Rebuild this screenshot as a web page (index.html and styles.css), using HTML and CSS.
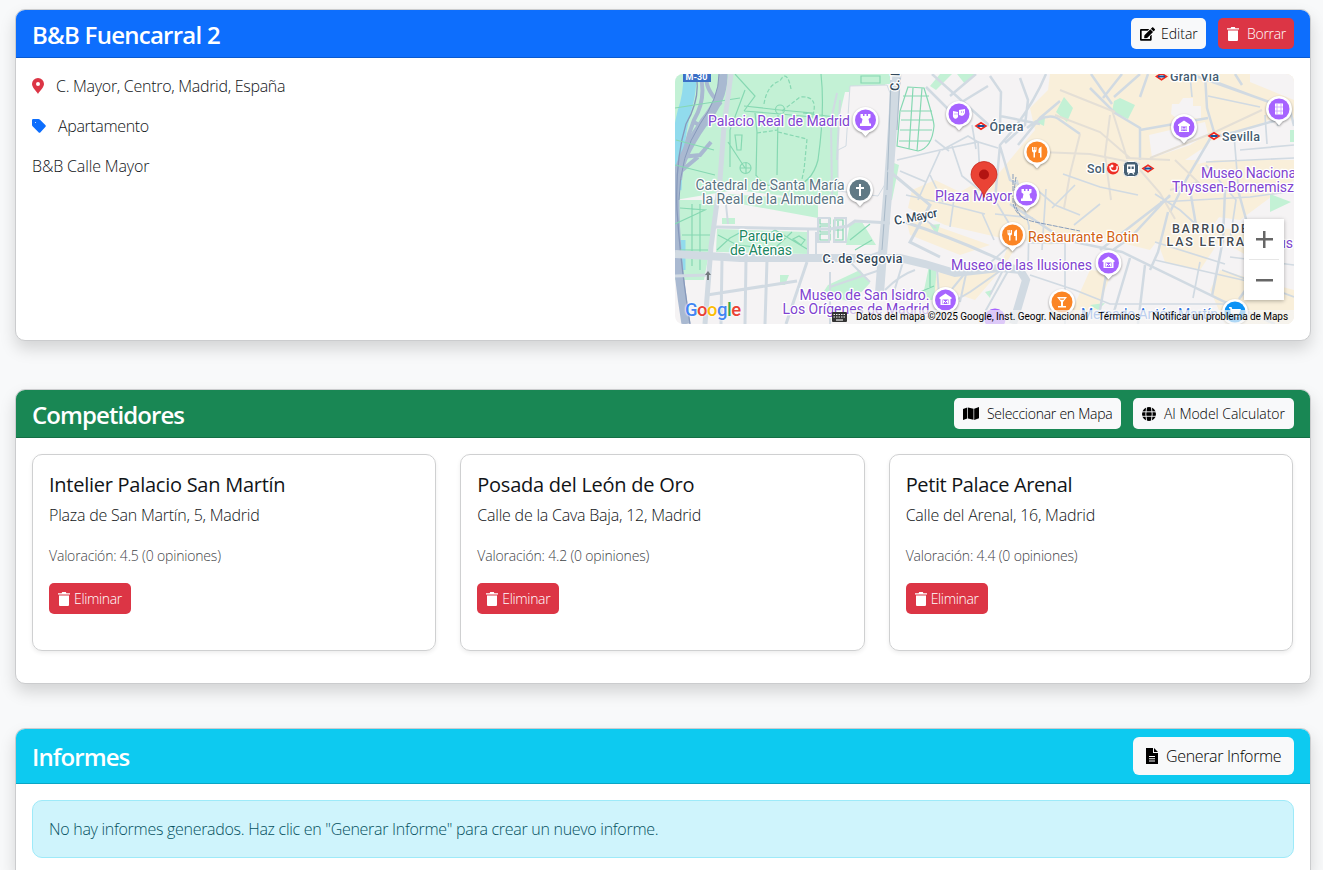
FILE: index.html
```html
<!DOCTYPE html>
<html lang="es">
<head>
<meta charset="utf-8">
<title>B&amp;B Fuencarral 2</title>
<link rel="stylesheet" href="styles.css">
</head>
<body>
<svg class="sprite" width="0" height="0" aria-hidden="true">
  <defs>
    <symbol id="trash" viewBox="0 0 12 14"><path d="M0 1.2h3.6L4.2 0h3.6l.6 1.2H12v1.3H0zM1 3.5h10v9.2c0 .8-.5 1.3-1.3 1.3H2.3C1.500 14 1 13.500 1 12.700z"/></symbol>
    <symbol id="edit" viewBox="0 0 576 512"><path d="M402.600 83.200l90.200 90.200c3.800 3.800 3.800 10 0 13.800L274.400 405.600l-92.800 10.300c-12.400 1.400-22.900-9.100-21.500-21.500l10.300-92.800L388.800 83.200c3.800-3.800 10-3.800 13.800 0zm162-22.900l-48.800-48.800c-15.200-15.200-39.900-15.200-55.200 0l-35.400 35.400c-3.800 3.800-3.800 10 0 13.800l90.200 90.200c3.800 3.800 10 3.800 13.800 0l35.400-35.400c15.200-15.300 15.200-40 0-55.200zM384 346.200V448H64V128h229.800c3.200 0 6.200-1.300 8.500-3.500l40-40c7.600-7.600 2.200-20.500-8.500-20.500H48C21.500 64 0 85.500 0 112v352c0 26.500 21.500 48 48 48h352c26.500 0 48-21.500 48-48V306.200c0-10.700-12.900-16-20.500-8.500l-40 40c-2.200 2.300-3.500 5.300-3.500 8.500z"/></symbol>
    <symbol id="file" viewBox="0 0 12 16"><path fill-rule="evenodd" d="M0 0h7v5h5v11H0zM8 0l4 4H8zM3 8v1h6V8zm0 2.300v1h6v-1zm0 2.200v1h6v-1z"/></symbol>

    <g id="pin-body"><path d="M0 16.500 L-3.800 12.300 C-9.500 10.500 -13 6 -13 0 A13 13 0 0 1 13 0 C13 6 9.500 10.500 3.800 12.300Z" fill="#fff"/></g>
    <g id="museum"><path d="M-6-2.500 0-6.500 6-2.500V-1H5v6H-5v-6h-1z" fill="#fff"/><path d="M-3-.5h6V4h-6z" fill="#a663ff"/><path d="M-2 3.500v-3l2 2 2-2v3" fill="none" stroke="#fff"/></g>
    <g id="rook"><path d="M-5-6h2.500v2h1.500v-2h2v2h1.500v-2H5v3.500L3-1l1 4.500h1.500V6h-11V3.500H-4L-3-1l-2-1.500z" fill="#fff"/></g>
    <g id="fork"><path d="M-5-5v3.500q0 2 1.500 2V5.500h1.500V.5q1.500 0 1.500-2V-5h-1v3h-.7v-3h-1v3h-.7v-3zM4.500-5.500q-3 1-3 4V1H3v4.500h1.500z" fill="#fff"/></g>
    <g id="metro"><path d="M-5 0 0-3.200 5 0 0 3.200z" fill="#fff" stroke="#f02a20" stroke-width="1.600"/><path d="M-3.500-1h7v2h-7z" fill="#14549c"/></g>
  </defs>
</svg>

<main class="page">
  <section class="card card--property">
    <header class="card-header card-header--blue">
      <h2 class="heading">B&amp;B Fuencarral 2</h2>
      <div class="actions">
        <button class="btn btn--light btn--edit"><svg class="icon icon--edit"><use href="#edit"/></svg><span>Editar</span></button>
        <button class="btn btn--danger btn--delete"><svg class="icon icon--trash"><use href="#trash"/></svg><span>Borrar</span></button>
      </div>
    </header>
    <div class="card-body property">
      <div class="details">
        <p class="detail detail--place"><svg class="icon icon--place" viewBox="0 0 12 16"><path fill-rule="evenodd" d="M6 16C4.500 13 0 9.500 0 6a6 6 0 0 1 12 0c0 3.500-4.500 7-6 10zM6 4a2 2 0 1 0 0 4 2 2 0 0 0 0-4z"/></svg><span>C. Mayor, Centro, Madrid, España</span></p>
        <p class="detail detail--type"><svg class="icon icon--tag" viewBox="0 0 14 14"><path fill-rule="evenodd" d="M0 1.200Q0 0 1.200 0H6.500Q7.300 0 8 .7L13.300 6Q14.300 7 13.300 8L8.500 13.200Q7.500 14.200 6.500 13.200L.8 7.500Q0 6.800 0 6zM3.500 3a.5.5 0 1 0 0 1 .5.5 0 0 0 0-1z"/></svg><span>Apartamento</span></p>
        <p class="detail detail--name"><span>B&amp;B Calle Mayor</span></p>
      </div>
      <div class="map">
        <svg class="map-canvas" viewBox="675 74 619 250">
          <rect x="675" y="74" width="619" height="250" fill="#f5f3f4"/>
          <g fill="#f9efda">
            <path d="M1050 74 1294 74V90L1262 74H1294V118L1278 130 1240 131 1245 134 1200 150 1185 160 1294 160V180L1240 220 1180 212 1150 250 1090 235 1050 245 1020 240 1005 265 975 300 950 292 925 290 940 272 965 272 1000 268 1010 240 945 225 908 208 912 190 935 180 960 192 985 178 1000 172 1018 150 1035 130 1030 108 1048 90z"/>
            <path d="M1168 224 1245 230 1268 250 1246 255 1220 240 1200 270 1165 262 1155 235zM1115 190 1190 170 1234 195 1200 245 1130 240zM1220 270 1294 290V324H1225L1210 290zM1090 270 1112 272 1095 315H1070zM905 215 990 245 960 255 910 235z"/>
          </g>
          <g fill="#f5f3f4">
            <path d="M1149 135 1205 122 1208 134 1190 145 1152 158zM1210 141 1240 134 1289 110 1294 150V160L1215 160 1198 164zM1250 82 1294 100V74H1250zM1172 104h7l4-6h10v8h8v12h-25l-5-4z"/>
            <path d="M1025 270 1070 280 1065 320H1028zM1140 262 1200 280 1195 324H1135z"/>
          </g>
          <g fill="#c3f1d5">
            <path d="M675 74H890L882 92H845L838 122V200H820L735 190 675 200zM675 200H720L710 248 704 280H675zM717 229 808 232 808 254 716 252zM728 194 818 200V218L730 202zM850 223 862 222 876 245 846 245zM722 218h13v6h-13zM780 275h9l-4 10h-5zM828 285 860 270 870 283 852 302 822 294zM862 74H890V84H862zM886 160 899 165 892 200H885zM929 266h8l-3 34h-12zM985 292l7-2-2 8zM930 86 940 74H952L936 90zM957 74H975L965 84zM1064 97 1073 108 1067 122 1056 112zM1034 121 1045 118 1044 126zM1114 101 1120 98 1135 105 1128 119 1112 112zM1270 194 1291 202 1270 212zM930 225 940 224 937 235zM1090 305 1105 303 1098 310zM1051 298h10v8h-8zM1290 130h4v12h-4z"/>
          </g>
          <g fill="none" stroke="#91dbed">
            <path d="M690 74Q690 95 684 112 676 145 675 190" stroke-width="13"/>
            <path d="M682 240V270" stroke-width="7"/>
          </g>
          <g fill="none" stroke="#a9b9d1">
            <path d="M723 74Q724 98 704 122 677 160 675 190 674 250 686 324" stroke-width="9"/>
            <path d="M700 74Q707 98 694 120 684 145 680 180M708 74Q702 86 721 105M694 122Q704 130 714 117M681 157 700 155 711 142M680 172 698 157" stroke-width="4"/>
            <path d="M696 74Q701 98 686 124 675 160 677 210 680 260 690 324" stroke="#8799bb" stroke-width="1.300"/>
            <path d="M719 74Q719 98 700 124 680 155 679 200" stroke="#8799bb" stroke-width="1"/>
          </g>
          <g class="paths" fill="none" stroke="#86d8b2" stroke-width="1.200">
            <path d="M744 106 780 110 813 113M744 111 780 114 813 117M780 105a4 4 0 1 1 0 9 4 4 0 0 1 0-9M755 113 757 132 756 176M745 90 730 130 730 167M778 115 777 175M735 74 755 96 744 111M821 74Q825 110 818 160 812 184 790 188M756 175Q765 190 790 188M740 168a5.500 5.500 0 1 0 11 0 5.500 5.500 0 0 0-11 0M740 168h11M746 162v12M735 135h7l-1 15h-4zM803 113 835 117M675 108 740 98M676 140 714 150M675 165 715 175M728 142 745 168M692 204v62M700 204v66M680 208 705 210 675 224M682 235h28M680 250h28"/>
            <path d="M764 104Q767 85 780 81 787 68 791 89M782 111 800 97Q820 95 812 118M778 132 807 139 804 170 800 188M757 133 778 130" stroke-dasharray="4 2"/>
            <path d="M717 250 730 238 745 230 760 240 775 230 807 249M718 235 737 245 774 249 792 232M793 239l6-3 6 4-4 5zM820 218h10v6h-10zM820 226h10v6h-10zM820 234h10v6h-10zM834 220h9v20h-9zM838 221v17M834 230h9M850 240 870 224M855 250 872 240"/>
            <path d="M908 87 924 88Q934 120 934 126 932 148 918 151L897 146 900 111zM903 96H929M901 111H932M900 130H932M899 141H930M913 88 909 149M922 88 917 151M901 120H933M930 267v22M934 286 920 292M861 76H880V83H861z"/>
          </g>
          <path d="M850 86 887 85 890 93 887 181 878 196 838 191 838 150 846 146z" fill="#f5f3f4" stroke="#d2dbe3"/>
          <g class="roads" fill="none" stroke="#d1dae2">
            <path d="M731 74 724 126 720 180 711 247 705 324" stroke-width="5"/>
            <path d="M897 74 893 120 888 190 882 260 879 300" stroke-width="9"/>
            <path d="M891 80 887 190M900 78 897 130M886 195 882 250" stroke="#a8b9c8" stroke-width="1"/>
            <path d="M675 254 740 258 820 258 900 258 925 264 955 273 1000 268 1020 270 1026 280 1013 324" stroke-width="8"/>
            <path d="M716 227 810 229 830 229 848 226 855 221 890 223M722 260 721 324M746 260 745 324M767 260 765 324M807 262 786 324M707 295 797 281M675 276 707 275" stroke-width="3"/>
            <path d="M808 230V256M816 232V256M835 218h11v24h-12zM818 218h11v24h-11z" stroke-width="2"/>
            <path d="M725 195 728 224M840 100 837 160M837 93 831 120 832 196M880 270 830 287M885 250 850 263M850 262 870 282M830 272V324M885 290Q900 275 915 270M893 295 903 262M937 268 940 310M966 272 952 289M966 274 960 302M1008 271 986 310 1000 324M1003 270 990 295M1000 271 970 292 915 324" stroke-width="2"/>
            <path d="M905 222Q950 237 990 255L1022 270M888 170 930 205 910 242 940 257" stroke-width="3"/>
            <path d="M932 74 990 126M926 87 955 116M988 86 952 108M950 96 976 74M990 76 1001 92 1000 125M1020 78 1028 100 1025 125 1005 143M1046 74Q1030 112 1000 145L995 200M1027 128Q1048 110 1060 120L1080 134M1018 145 1040 118 1060 101M1000 116 1040 124M1000 146 1010 180 1018 184" stroke-width="2.500"/>
            <path d="M897 160 940 150 978 142 998 148M940 151 926 182M952 146 962 176 985 194M900 171 926 182 918 200M978 141 980 176M942 150 968 136 978 142M935 140 949 151M972 125 976 149M906 195 950 205 985 214M930 175 943 202M923 218 936 228M955 192 950 227M982 213 994 240M995 200 1010 225 1007 244M995 214 1033 218M1017 180 1029 226 1028 270M1007 248 991 262M1030 184 1055 205 1080 215" stroke-width="1.700"/>
            <path d="M1090 88 1115 113 1140 128 1140 160M1091 74 1112 104M1122 74 1103 98M1140 74 1114 97M1148 74 1140 97M1140 130 1208 118M1205 74 1207 108 1214 132 1187 178 1170 212M1205 78 1290 110 1294 126M1190 74 1278 105 1278 126M1235 74 1242 85M1288 117 1235 132 1210 138" stroke-width="2.500"/>
            <path d="M1150 158 1215 132 1262 110M1112 110 1127 158 1170 160M1060 90 1115 112M1055 115 1100 132 1130 158M1040 152 1090 154 1140 164M1080 134 1070 174 1064 208M1110 115 1105 155 1111 200M1140 170 1160 193 1175 219M1175 160 1198 182 1170 190" stroke="#e4dfd6" stroke-width="2"/>
            <path d="M1234 135 1238 184M1206 162 1294 158M1265 115 1267 144M1240 150 1294 145M1206 165 1236 200 1230 240M1190 75 1192 97M1208 96 1260 107M1063 174 1100 187 1138 195" stroke-width="1.700"/>
            <path d="M1010 204 1065 240 1122 252 1225 302 1275 324M1170 195 1130 238 1110 252 1100 310M1100 250 1170 196M1130 258 1113 315M1145 265 1138 324M1168 212 1158 252 1150 270M1225 190 1223 240 1212 296M1190 190 1196 225M1238 190 1260 270 1239 299" stroke-width="2.500"/>
            <path d="M1028 243H1065V324M1030 275 1075 290 1110 304H1230M1074 225 1100 204M1046 189 1042 250M1155 194 1180 210 1200 228M1155 242 1225 264M1155 260 1260 284M1200 262 1193 298M1222 270 1294 297M1160 202 1250 197 1294 191M1230 257 1294 265M1052 208 1075 185" stroke-width="1.700"/>
          </g>
          <path d="M1013 174V202Q1015 218 1035 222L1080 231M1016 177Q1010 210 1025 219" fill="none" stroke="#879dbc" stroke-width="1" stroke-dasharray="5 1"/>
          <rect x="683" y="69" width="28" height="13" fill="#3b70c6"/>
          <path d="M708 271l-3 4h2v5h2v-5h2z" fill="#73797e"/>

          <g>
            <g class="pin" transform="translate(865.500 120)"><use href="#pin-body"/><circle r="10.500" fill="#a663ff"/><use href="#rook"/></g>
            <g class="pin" transform="translate(1026.500 195)"><use href="#pin-body"/><circle r="10.500" fill="#a663ff"/><use href="#rook"/></g>
            <g class="pin" transform="translate(959 114)"><use href="#pin-body"/><circle r="10.500" fill="#a663ff"/><path d="M-6-3 -1-2V3q-1.500 2.500-3.500 1.500T-6 0zM0-4 6-5V-1Q5 2 3 2L0 1z" fill="#fff"/><path d="M-4.500 0h1m1 0h1M2-2h1m1 0h1" stroke="#a663ff"/></g>
            <g class="pin" transform="translate(1037 152)"><use href="#pin-body"/><circle r="10.500" fill="#fb8525"/><use href="#fork"/></g>
            <g class="pin" transform="translate(1012.500 235)"><use href="#pin-body"/><circle r="10.500" fill="#fb8525"/><use href="#fork"/></g>
            <g class="pin" transform="translate(1184 127)"><use href="#pin-body"/><circle r="10.500" fill="#a663ff"/><use href="#museum"/></g>
            <g class="pin" transform="translate(1279 109)"><use href="#pin-body"/><circle r="10.500" fill="#a663ff"/><path d="M-4-5.500h8v11h-8z" fill="#fff"/><path d="M-2-5v10M2-5v10M-4-2h8M-4 2h8" stroke="#c7a0ff" stroke-width=".8"/></g>
            <g class="pin" transform="translate(860 190)"><use href="#pin-body"/><circle r="10.500" fill="#607985"/><path d="M-1-6H1v3h3v2H1v7h-2v-7h-3v-2h3z" fill="#fff"/></g>
            <g class="pin" transform="translate(1108.500 263)"><use href="#pin-body"/><circle r="10.500" fill="#a663ff"/><use href="#museum"/></g>
            <g class="pin" transform="translate(945.500 300)"><use href="#pin-body"/><circle r="10.500" fill="#a663ff"/><use href="#museum"/></g>
            <g class="pin" transform="translate(1062 302)"><use href="#pin-body"/><circle r="10.500" fill="#fb8525"/><path d="M-5-5H5L1 0v4h3v1.500h-8V4h3V0zM-2.500-3.500h5L1.500-2.200h-3z" fill="#fff" fill-rule="evenodd"/></g>
            <g class="pin" transform="translate(1235 312)"><use href="#pin-body"/><circle r="10.500" fill="#0b92f5"/><path d="M-6-5h2.500l.7 2H6L4 2h-6.500l1 1.500H4V5h-7l-1-2-.8-6.500H-6z" fill="#fff"/></g>
            <circle cx="995" cy="319" r="10.500" fill="#a663ff"/>
          </g>
          <use href="#metro" x="981" y="126"/><use href="#metro" x="1161.500" y="76.500"/><use href="#metro" x="1214" y="136"/><use href="#metro" x="1148" y="168.500"/>
          <circle cx="1113" cy="168.500" r="6" fill="#ed2e24"/><path d="M1110 166q0 5 4 5t3-5" fill="none" stroke="#fff" stroke-width="1.500"/><circle cx="1112" cy="166" r="1.500" fill="#fff"/>
          <rect x="1123.500" y="161.500" width="15" height="15" rx="4" fill="#455f73" stroke="#fff"/><path fill-rule="evenodd" d="M1127 164.500h8v8h-1.500l1 2h-1.500l-.7-1.500h-2.600l-.7 1.500h-1.500l1-2H1127zm1.200 2v2.500h2.200v-2.500zm3.400 0v2.500h2.200v-2.500z" fill="#fff"/>

          <g class="label label--poi">
            <text x="708" y="126" textLength="142">Palacio Real de Madrid</text>
            <text x="935" y="201" textLength="77">Plaza Mayor</text>
            <text x="951" y="269.500" textLength="141">Museo de las Ilusiones</text>
            <text x="799.500" y="299.500" textLength="130">Museo de San Isidro.</text>
            <text x="782.500" y="313.500" textLength="147">Los Orígenes de Madrid</text>
            <text x="1201" y="178" textLength="95">Museo Naciona</text>
            <text x="1172" y="192" textLength="122">Thyssen-Bornemisz</text>
            <text x="1278" y="248" textLength="15">us</text>
          </g>
          <g class="label label--church">
            <text x="695.500" y="190" textLength="149">Catedral de Santa María</text>
            <text x="702" y="204" textLength="142">la Real de la Almudena</text>
          </g>
          <g class="label label--park">
            <text x="739" y="241" textLength="44">Parque</text>
            <text x="730" y="255" textLength="62">de Atenas</text>
          </g>
          <g class="label label--food"><text x="1028" y="242" textLength="111">Restaurante Botin</text></g>
          <g class="label label--shop"><text x="1081" y="318.500" textLength="137">Mercado Antón Martín</text></g>
          <g class="label label--street">
            <text x="822.500" y="263" textLength="80">C. de Segovia</text>
            <text x="895" y="225" textLength="44" transform="rotate(-11 895 225)">C. Mayor</text>
            <text x="899" y="91" transform="rotate(-88 899 91)">C. B</text>
          </g>
          <g class="label label--metro">
            <text x="989.500" y="130.500" textLength="34">Ópera</text>
            <text x="1170" y="80.500" textLength="49">Gran Vía</text>
            <text x="1222" y="140.500" textLength="38">Sevilla</text>
            <text x="1087" y="173" textLength="18">Sol</text>
          </g>
          <g class="label label--district">
            <text x="1172" y="233" textLength="76">BARRIO DE</text>
            <text x="1166.500" y="246" textLength="87">LAS LETRAS</text>
          </g>
          <text class="shield" x="685.500" y="80" textLength="22">M-30</text>

          <path d="M984 197.500C983 188 971 184 971 174.500a13 13 0 0 1 26 0C997 184 985 188 984 197.500z" fill="#ea4335" stroke="#c5281d" stroke-width=".8"/>
          <circle cx="984" cy="174.500" r="5" fill="#b31412"/>
        </svg>
        <div class="map-logo"><i class="g-blue">G</i><i class="g-red">o</i><i class="g-yellow">o</i><i class="g-blue">g</i><i class="g-green">l</i><i class="g-red">e</i></div>
        <div class="map-zoom"><span class="zoom-in"></span><span class="zoom-out"></span></div>
        <div class="map-legal">
          <svg class="keyboard" viewBox="0 0 15 10"><rect width="15" height="10" rx="1" fill="#333"/><path d="M1.500 2.500h12M1.500 5h12" stroke="#eee" stroke-width="1.200" stroke-dasharray="1.500 1"/><path d="M4 8h7" stroke="#eee" stroke-width="1.200"/></svg>
          <span class="legal-data">Datos del mapa ©2025 Google, Inst. Geogr. Nacional</span>
          <span class="legal-terms">Términos</span>
          <span class="legal-report">Notificar un problema de Maps</span>
        </div>
      </div>
    </div>
  </section>

  <section class="card card--competitors">
    <header class="card-header card-header--green">
      <h2 class="heading heading--tight">Competidores</h2>
      <div class="actions">
        <button class="btn btn--light btn--select"><svg class="icon icon--map" viewBox="0 0 16 13"><path d="M0 2 4.300.5V11.500L0 13zM5 .5 10.500 1.800V12.800L5 11.500zM11.200 1.800 16 0V11.300L11.200 13z"/></svg><span>Seleccionar en Mapa</span></button>
        <button class="btn btn--light btn--model"><svg class="icon icon--globe" viewBox="0 0 14 14"><circle cx="7" cy="7" r="7"/><path d="M0 4.800h14M0 9.300h14M4.600 0Q3 7 4.600 14M9.400 0Q11 7 9.400 14" fill="none" stroke="#f8f9fa" stroke-width=".9"/></svg><span>AI Model Calculator</span></button>
      </div>
    </header>
    <div class="card-body competitors">
      <article class="competitor">
        <h5 class="name">Intelier Palacio San Martín</h5>
        <p class="address">Plaza de San Martín, 5, Madrid</p>
        <p class="rating">Valoración: 4.5 (0 opiniones)</p>
        <button class="btn btn--danger btn--remove"><svg class="icon icon--trash"><use href="#trash"/></svg><span>Eliminar</span></button>
      </article>
      <article class="competitor">
        <h5 class="name">Posada del León de Oro</h5>
        <p class="address">Calle de la Cava Baja, 12, Madrid</p>
        <p class="rating">Valoración: 4.2 (0 opiniones)</p>
        <button class="btn btn--danger btn--remove"><svg class="icon icon--trash"><use href="#trash"/></svg><span>Eliminar</span></button>
      </article>
      <article class="competitor">
        <h5 class="name name--tight">Petit Palace Arenal</h5>
        <p class="address">Calle del Arenal, 16, Madrid</p>
        <p class="rating">Valoración: 4.4 (0 opiniones)</p>
        <button class="btn btn--danger btn--remove"><svg class="icon icon--trash"><use href="#trash"/></svg><span>Eliminar</span></button>
      </article>
    </div>
  </section>

  <section class="card card--reports">
    <header class="card-header card-header--cyan">
      <h2 class="heading heading--tight">Informes</h2>
      <button class="btn btn--light btn--generate"><svg class="icon icon--file"><use href="#file"/></svg><span>Generar Informe</span></button>
    </header>
    <div class="card-body card-body--reports">
      <div class="alert">No hay informes generados. Haz clic en "Generar Informe" para crear un nuevo informe.</div>
    </div>
  </section>
</main>
</body>
</html>
```
FILE: styles.css
```css
* { box-sizing: border-box; }
html { overflow: hidden; height: 870px; }
body {
  margin: 0;
  height: 870px;
  overflow: hidden;
  background: #f8f9fa;
  color: #111417;
  font: 300 16px/24px "Open Sans", "Noto Sans", sans-serif;
}
h2, h5, p { margin: 0; }
.sprite { display: block; }
.page { padding: 9px 12px 0 15px; }
.card {
  display: flex;
  flex-direction: column;
  border: 1px solid #cbccce;
  border-radius: 10px;
  background: #fff;
  box-shadow: 0 8px 16px rgba(0, 0, 0, .15);
}
.card--property { height: 332px; margin-bottom: 48px; }
.card--competitors { height: 295px; margin-bottom: 44px; }
.card--reports { height: 142px; border-bottom: 0; border-radius: 10px 10px 0 0; }
.card-header {
  display: flex;
  align-items: center;
  justify-content: space-between;
  padding: 8px 16px;
  border-bottom: 1px solid rgba(0, 0, 0, .175);
  border-radius: 9px 9px 0 0;
  color: #fff;
}
.card-header--blue { background: #0d6efd; }
.card-header--green { background: #198754; }
.card-header--cyan { background: #0dcaf0; }
.heading { padding-top: 1px; font-size: 24px; font-weight: 600; line-height: 29px; letter-spacing: -.75px; }
.heading--tight { letter-spacing: -.92px; }
.actions { display: flex; gap: 12px; }
.card-body { padding: 16px; }
.card-body--reports { padding-bottom: 0; }

.btn {
  display: flex;
  align-items: center;
  height: 31px;
  padding: 0 9px;
  border: 0;
  border-radius: 5px;
  font: 300 14px/21px "Open Sans", "Noto Sans", sans-serif;
  white-space: nowrap;
}
.btn--light { background: #f8f9fa; color: #000; }
.btn--danger { background: #dc3545; color: #fff; }
.btn--edit { width: 75px; gap: 6px; }
.btn--delete { width: 76px; gap: 8px; letter-spacing: -.3px; }
.btn--select { width: 167px; gap: 8px; letter-spacing: -.27px; }
.btn--model { width: 161px; gap: 8px; letter-spacing: -.05px; }
.btn--generate { width: 161px; height: 38px; padding: 0 13px; gap: 8px; border-radius: 6px; font-size: 16px; letter-spacing: -.35px; }
.btn--remove { width: 82px; gap: 4px; letter-spacing: -.35px; }

.icon { flex: none; fill: currentColor; }
.icon--trash { width: 12px; height: 14px; }
.icon--edit { width: 15px; height: 14px; }
.icon--map { width: 16px; height: 13px; }
.icon--globe { width: 14px; height: 14px; }
.icon--file { width: 12px; height: 16px; }
.icon--place { width: 12px; height: 16px; color: #dc3545; }
.icon--tag { width: 14px; height: 14px; color: #0d6efd; }

.property { display: grid; grid-template-columns: 1fr 619px; gap: 24px; }
.details { display: flex; flex-direction: column; gap: 16px; }
.detail { display: flex; align-items: center; gap: 12px; }
.detail--place { letter-spacing: -.29px; }
.detail--type { letter-spacing: -.37px; }
.detail--name { letter-spacing: -.14px; }

.map { position: relative; height: 250px; overflow: hidden; border-radius: 8px; }
.map-canvas { display: block; width: 619px; height: 250px; }
.pin { filter: drop-shadow(0 1px 1px rgba(0, 0, 0, .4)); }
.label { font-family: Roboto, sans-serif; font-size: 14px; font-weight: 400; stroke: #fff; stroke-width: 2.5px; stroke-linejoin: round; paint-order: stroke; }
.label--poi { fill: #8043d0; }
.label--church { fill: #5b7583; }
.label--park { fill: #1b8762; }
.label--food { fill: #d26213; }
.label--shop { fill: #3474e0; }
.label--street { fill: #34495b; font-size: 12.500px; font-weight: 500; }
.label--metro { fill: #455c70; font-size: 12.500px; font-weight: 500; }
.label--district { fill: #434a51; font-size: 12.500px; font-weight: 500; }
.shield { font: 700 9px Roboto, sans-serif; fill: #fff; }
.map-logo {
  position: absolute;
  left: 10px;
  bottom: 2px;
  font: 500 18.500px/24px Roboto, sans-serif;
  letter-spacing: -.5px;
  text-shadow: 0 0 2px #fff, 0 0 2px #fff;
}
.map-logo i { font-style: normal; }
.g-blue { color: #4285f4; }
.g-red { color: #ea4335; }
.g-yellow { color: #fbbc04; }
.g-green { color: #34a853; }
.map-zoom {
  position: absolute;
  right: 10px;
  bottom: 24px;
  display: grid;
  grid-template-rows: 40px 40px;
  gap: 1px;
  width: 40px;
  background: linear-gradient(#e6e6e6, #e6e6e6) center / 30px 1px no-repeat, #fff;
  box-shadow: 0 1px 4px rgba(0, 0, 0, .3);
}
.zoom-out { background: linear-gradient(#666, #666) center / 17px 2.5px no-repeat; }
.zoom-in { background: linear-gradient(#666, #666) center / 17px 2.5px no-repeat, linear-gradient(#666, #666) center / 2.5px 17px no-repeat; }
.map-legal {
  position: absolute;
  right: 0;
  bottom: 0;
  display: flex;
  align-items: center;
  width: 471px;
  height: 14px;
  padding: 0 6px 0 9px;
  background: linear-gradient(rgba(245, 245, 245, .7), rgba(245, 245, 245, .7)) right / 444px 100% no-repeat;
  color: #000;
  font: 400 10px/14px Roboto, sans-serif;
  white-space: nowrap;
}
.keyboard { flex: none; width: 15px; height: 10px; margin-right: 9px; }
.legal-data { width: 243px; letter-spacing: -.03px; }
.legal-terms { width: 54px; }
.legal-report { letter-spacing: -.06px; }

.competitors { display: grid; grid-template-columns: repeat(3, 1fr); gap: 24px; padding-right: 17px; }
.competitor {
  height: 197px;
  padding: 16px;
  border: 1px solid #cfd0d1;
  border-radius: 10px;
  box-shadow: 0 2px 4px rgba(0, 0, 0, .075);
}
.name { padding-top: 2px; margin-bottom: 6px; font-size: 20px; font-weight: 500; line-height: 24px; letter-spacing: -.26px; }
.name--tight { letter-spacing: -.37px; }
.address { margin-bottom: 16px; letter-spacing: -.22px; }
.rating { padding-top: 1px; margin-bottom: 15px; color: #3f4448; font-size: 14px; letter-spacing: -.18px; }
.alert {
  height: 58px;
  padding: 16px;
  border: 1px solid #9eeaf9;
  border-radius: 10px;
  background: #cff4fc;
  color: #055160;
  letter-spacing: -.285px;
}
```
